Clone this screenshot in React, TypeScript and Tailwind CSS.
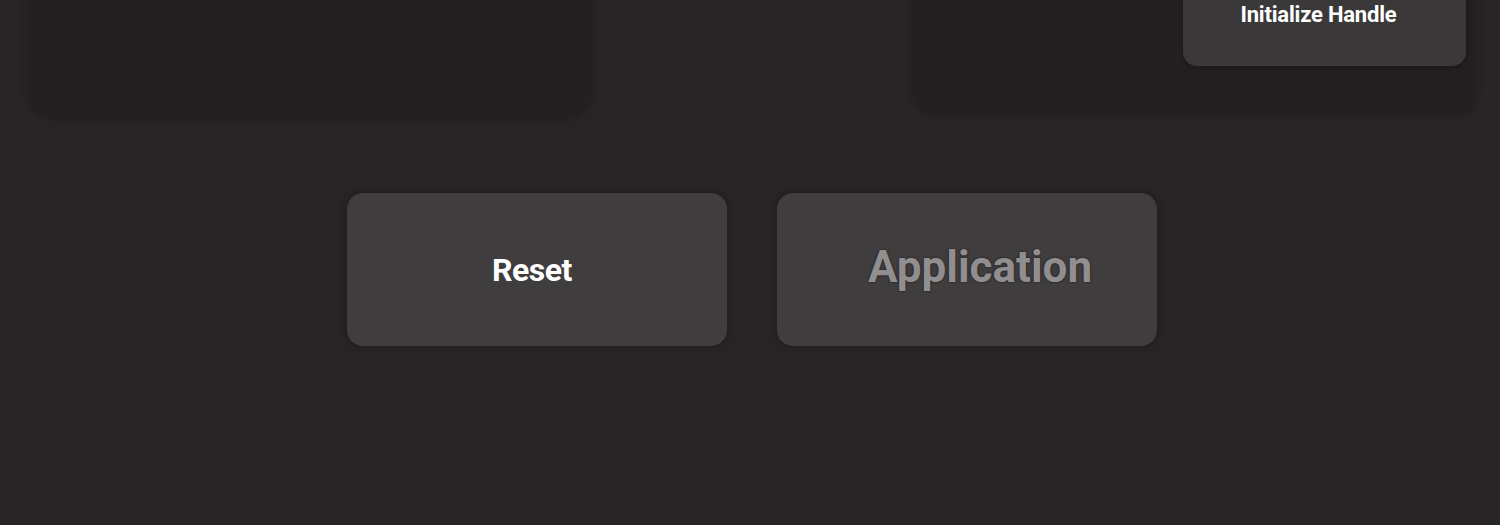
export default function App() {
  return (
    <div className="h-[525px] w-full overflow-hidden bg-[#292526] font-['Roboto','Liberation_Sans',sans-serif]">
      {/* Top panels, mostly scrolled out of view */}
      <div className="mt-[-200px] flex justify-between pl-[28px] pr-[24px]">
        <div className="h-[315px] w-[562px] rounded-[22px] bg-[#242021] shadow-[0_2px_10px_rgba(0,0,0,0.25)]" />
        <div className="flex h-[313px] w-[562px] items-end justify-end rounded-[22px] bg-[#242021] p-[10px] pb-[47px] shadow-[0_2px_10px_rgba(0,0,0,0.25)]">
          <button className="flex h-[200px] w-[283px] flex-col items-center justify-end rounded-[14px] bg-[#3a3839] pb-[38px] pr-[12px] text-[22px] font-bold leading-[26px] tracking-[-0.2px] text-white shadow-[0_2px_6px_rgba(0,0,0,0.3)]">
            <span>Initialize Handle</span>
          </button>
        </div>
      </div>

      {/* Action buttons */}
      <div className="mt-[78px] flex justify-center gap-[50px] pl-[4px]">
        <button className="flex h-[153px] w-[380px] items-center justify-center rounded-[16px] bg-[#403d3e] pr-[10px] text-[32px] font-bold tracking-[-0.5px] text-white shadow-[0_0_10px_rgba(0,0,0,0.35)]">
          Reset
        </button>
        <button className="flex h-[153px] w-[380px] items-center justify-center rounded-[16px] bg-[#403d3e] pb-[6px] pl-[26px] text-[44px] font-bold text-[#908e8f] shadow-[0_0_10px_rgba(0,0,0,0.35)] [text-shadow:0_0_2px_#2a2526,0_0_2px_#2a2526]">
          Application
        </button>
      </div>
    </div>
  )
}
